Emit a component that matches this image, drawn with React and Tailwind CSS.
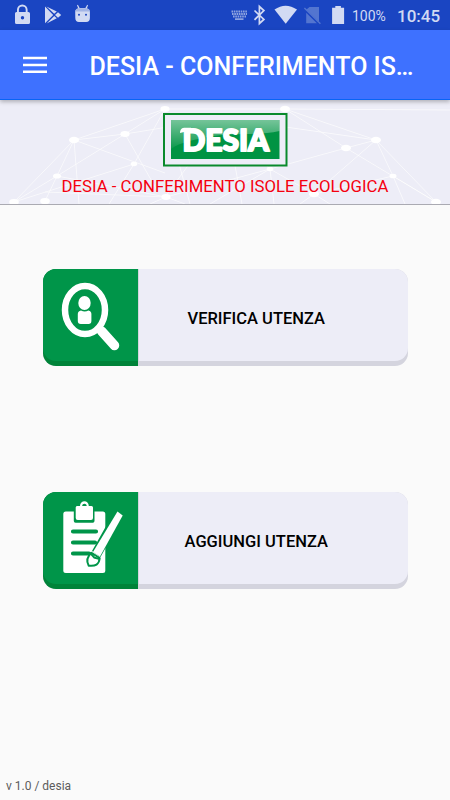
const nodes = [
  [165, 9, 4.6], [125, 34, 4.6], [74, 40, 5], [134, 64, 3.3], [57, 76, 4], [14, 102, 4.8],
  [45, 101, 4.8], [166, 97, 4.6], [223, 18, 4.6], [285, 9, 5], [376, 40, 5], [346, 48, 5],
  [393, 76, 3.5], [436, 102, 5], [270, 69, 3.3], [314, 94, 5],
];

const links = [
  [165, 9, 74, 40], [165, 9, 125, 34], [165, 9, 134, 64], [165, 9, 285, 9], [74, 40, 125, 34],
  [125, 34, 223, 18], [125, 34, 57, 76], [125, 34, 158, 92], [74, 40, 165, 73], [74, 40, 14, 102],
  [74, 40, 57, 76], [74, 40, 79, 104], [57, 76, 14, 102], [57, 76, 45, 101], [57, 76, 166, 97],
  [134, 64, 14, 102], [134, 64, 109, 104], [166, 97, 45, 92], [166, 97, 150, 104], [166, 97, 185, 104],
  [285, 9, 376, 40], [285, 9, 346, 48], [285, 9, 450, 10], [223, 18, 376, 40], [376, 40, 346, 48],
  [376, 40, 393, 76], [376, 40, 436, 102], [346, 48, 436, 102], [346, 48, 270, 69], [376, 40, 314, 94],
  [393, 76, 436, 102], [393, 76, 314, 94], [393, 76, 405, 104], [270, 69, 314, 94], [314, 94, 300, 104],
  [314, 94, 330, 104], [223, 18, 165, 97], [223, 18, 270, 69], [178, 60, 190, 104], [234, 60, 242, 104],
  [270, 69, 210, 104], [270, 69, 274, 104], [166, 97, 270, 69],
];

function StatusBar() {
  return (
    <div className="flex h-[30px] items-center bg-[#1a45c2] text-[#d2daf3]">
      <svg className="h-[30px] w-[100px]" viewBox="0 0 100 30" fill="currentColor">
        <path
          fillRule="evenodd"
          d="M16.5 12H17v-2.2a5.3 5.3 0 0 1 10.6 0V12h.8a1.6 1.6 0 0 1 1.6 1.6v8.8a1.6 1.6 0 0 1-1.6 1.6H16.6a1.6 1.6 0 0 1-1.6-1.6v-8.8a1.6 1.6 0 0 1 1.5-1.6Zm2.4 0h6.8V9.8a3.4 3.4 0 0 0-6.8 0Zm3.6 4a1.7 1.7 0 1 0 0 3.4 1.7 1.7 0 0 0 0-3.4Z"
        />
        <path d="M45 6.4v16.9l8.2-8.4ZM46.4 6.4l7.8 7.4 2.6-2.2ZM54.2 15.9l-7.6 7.5 10.2-5.2ZM58 12.2l-3 2.7 3 2.9 3.2-2.9Z" />
        <path d="M75.2 11.8c0-2 1.7-3 3-3.4L77 5.2l.9-.4L79.6 8h5.8l1.8-3.2.8.4-1.1 3.2c1.8.5 3 1.7 3 3.4v6.3c0 2.8-1.3 4-3.7 4h-7.3c-2.2 0-3.6-1.2-3.6-4Z" />
        <path d="M75.2 11.5c0-2 1.7-3 3-3.2h8.6c1.9.3 3 1.5 3 3.2Z" fill="#a3b4e5" />
        <circle cx="79" cy="14.8" r="1" fill="#1a45c2" />
        <circle cx="86" cy="14.8" r="1" fill="#1a45c2" />
      </svg>
      <svg className="ml-[125px] h-[30px] w-[125px]" viewBox="225 0 125 30" fill="currentColor">
        <path d="M231.5 11.5h16M232 14h15M233 16.5h13" fill="none" stroke="#8fa4df" strokeWidth="1.8" strokeDasharray="1.6 .7" />
        <path d="M235 19.1h8.5" stroke="#a8b8e7" strokeWidth="1.4" />
        <path d="m254.5 10.5 9.4 9-4.5 4V6.5l4.5 4-9.4 9.3" fill="none" stroke="currentColor" strokeWidth="1.7" />
        <path d="M274.5 9.5Q285.5 1.9 297 9.5L285.7 23.8Z" />
        <path d="M309.5 7h9.5v14.7L306.2 9.8ZM306.2 12.7v10.5h10.7Z" fill="#5375d0" />
        <path d="m304.4 8 16 15.7" stroke="#5375d0" strokeWidth="1.3" />
        <path d="M335.3 6h5.6v1.7h3.2V24h-12V7.7h3.2Z" />
      </svg>
      <span className="ml-[2px] w-[45px] pt-[2px] font-['Roboto'] text-[14px] leading-none">100%</span>
      <span className="pt-[3px] font-['Roboto'] text-[17px] font-medium leading-none">10:45</span>
    </div>
  );
}

function AppBar() {
  return (
    <div className="relative z-10 flex h-[70px] items-center border-b border-[#0864f5] bg-[#3e71ff] pl-[23px] text-white shadow-[0_2px_4px_rgba(0,0,0,0.25)]">
      <svg className="h-[18px] w-6" viewBox="0 0 24 18" stroke="currentColor" strokeWidth="2.4">
        <path d="M0 2h24M0 9h24M0 15.7h24" />
      </svg>
      <h1 className="ml-[42.5px] whitespace-nowrap pt-[3px] font-['Roboto'] text-[25px] font-medium leading-none">
        DESIA - CONFERIMENTO IS…
      </h1>
    </div>
  );
}

function Logo() {
  return (
    <svg className="h-[54px] w-[125px]" viewBox="0 0 125 54">
      <defs>
        <linearGradient id="shine" x1="0" y1="0" x2="0" y2="1">
          <stop offset="0" stopColor="#fff" stopOpacity="0.46" />
          <stop offset="1" stopColor="#fff" stopOpacity="0.05" />
        </linearGradient>
      </defs>
      <rect x="1" y="1" width="122.5" height="51.5" fill="#ededf7" stroke="#0a8a2c" strokeWidth="2" />
      <rect x="8" y="7" width="108.5" height="39" fill="#009343" />
      <path d="M8 7h108.5v11C94 23 67 19 45 24 30 27 18 29 8 36Z" fill="url(#shine)" />
      <text
        x="19.5"
        y="37.5"
        textLength="86.5"
        lengthAdjust="spacingAndGlyphs"
        fill="#fff"
        stroke="#fff"
        strokeWidth="2"
        strokeLinejoin="round"
        className="font-['Lato'] text-[31px] font-black"
      >
        DESIA
      </text>
      <path d="M17 20c0-3 1-5 4-5.3h7V19h-7Z" fill="#fff" />
    </svg>
  );
}

function Header() {
  return (
    <header className="relative h-[105px] overflow-hidden border-b border-[#aaaab2] bg-[#ededf7]">
      <svg className="absolute inset-0 h-[104px] w-[450px]" viewBox="0 0 450 104">
        {links.map(([x1, y1, x2, y2], i) => (
          <line key={i} x1={x1} y1={y1} x2={x2} y2={y2} stroke="#fff" strokeWidth="1" opacity="0.65" />
        ))}
        {nodes.map(([cx, cy, r], i) => (
          <ellipse key={i} cx={cx} cy={cy} rx={r} ry={r * 0.65} fill="#fff" />
        ))}
      </svg>
      <div className="relative flex flex-col items-center pt-[12.5px]">
        <Logo />
        <p className="mt-[10px] whitespace-nowrap font-['Roboto'] text-[16.75px] leading-[19px] text-[#f5000f]">
          DESIA - CONFERIMENTO ISOLE ECOLOGICA
        </p>
      </div>
    </header>
  );
}

function SearchUserIcon() {
  return (
    <svg className="h-[92px] w-[95px]" viewBox="0 0 95 92" fill="#fff">
      <ellipse cx="42" cy="41" rx="20" ry="24" fill="none" stroke="#fff" strokeWidth="6.5" />
      <path d="m58.5 62 13 14.5" stroke="#fff" strokeWidth="9.5" strokeLinecap="round" />
      <ellipse cx="41.5" cy="34" rx="6.2" ry="7" />
      <path d="M38 41.5q3.700 2.200 7.400 0 3 .5 3 3.500v7q0 3-3 3h-7.600q-3 0-3-3v-7q0-3 3.200-3.500Z" />
    </svg>
  );
}

function ClipboardIcon() {
  return (
    <svg className="h-[92px] w-[95px]" viewBox="0 0 95 92" fill="#fff">
      <rect x="20.3" y="19.5" width="42" height="61.5" rx="2.5" />
      <path d="M30.800 18h20.700v11q0 1.700-1.700 1.700H32.500q-1.700 0-1.700-1.700Z" fill="#009549" />
      <path
        fillRule="evenodd"
        d="M34 14h3c0-6.500 8.800-6.500 8.800 0h2.700q1.500 0 1.500 1.500V26q0 2-2 2H34.700q-2 0-2-2V15.500q0-1.500 1.300-1.500Zm5.200 0h4.500c0-3-4.500-3-4.500 0Z"
      />
      <path d="M30 39.500h23M30 50.500h22M30 61.500h16" stroke="#009549" strokeWidth="4.2" strokeLinecap="round" />
      <path d="M67 27 49 59l8.500 6 9-16V27Z" fill="#009549" />
      <path d="m74.500 19.500 5.200 4-22.700 41-7-4.500Z" />
      <path
        d="m48.400 60.800 8.300 5.200c-.5 6.500-4.300 8.500-11 7.700-2.600-4.500-1.200-9.300 2.700-12.900Z"
        stroke="#009549"
        strokeWidth="2"
        strokeLinejoin="round"
      />
      <path d="m47.800 61.500 3.500 4.200 4.700 1" fill="none" stroke="#009549" strokeWidth="2" strokeLinecap="round" />
    </svg>
  );
}

function MenuButton({ icon, label }) {
  return (
    <button className="flex h-[97px] w-[365px] overflow-hidden rounded-[13px] bg-[#d4d4de]">
      <span className="h-[97px] w-[95px] shrink-0 bg-[#008339]">
        <span className="block h-[92px] overflow-hidden rounded-bl-[13px] bg-[#009549]">{icon}</span>
      </span>
      <span className="ml-[1.5px] flex h-[92px] flex-1 items-center justify-center rounded-br-[13px] bg-[#ededf7] pr-[34px] pt-[8px] font-['Roboto'] text-[16.5px] font-medium text-black">
        {label}
      </span>
    </button>
  );
}

function App() {
  return (
    <div className="flex h-[800px] w-[450px] flex-col overflow-hidden bg-[#fafafa]">
      <StatusBar />
      <AppBar />
      <Header />
      <main className="flex flex-1 flex-col items-center gap-[126px] pt-[64px]">
        <MenuButton icon={<SearchUserIcon />} label="VERIFICA UTENZA" />
        <MenuButton icon={<ClipboardIcon />} label="AGGIUNGI UTENZA" />
      </main>
      <footer className="pb-[6px] pl-[6px] font-['Roboto'] text-[12px] leading-4 text-[#5c5c5c]">v 1.0 / desia</footer>
    </div>
  );
}

export default App;
